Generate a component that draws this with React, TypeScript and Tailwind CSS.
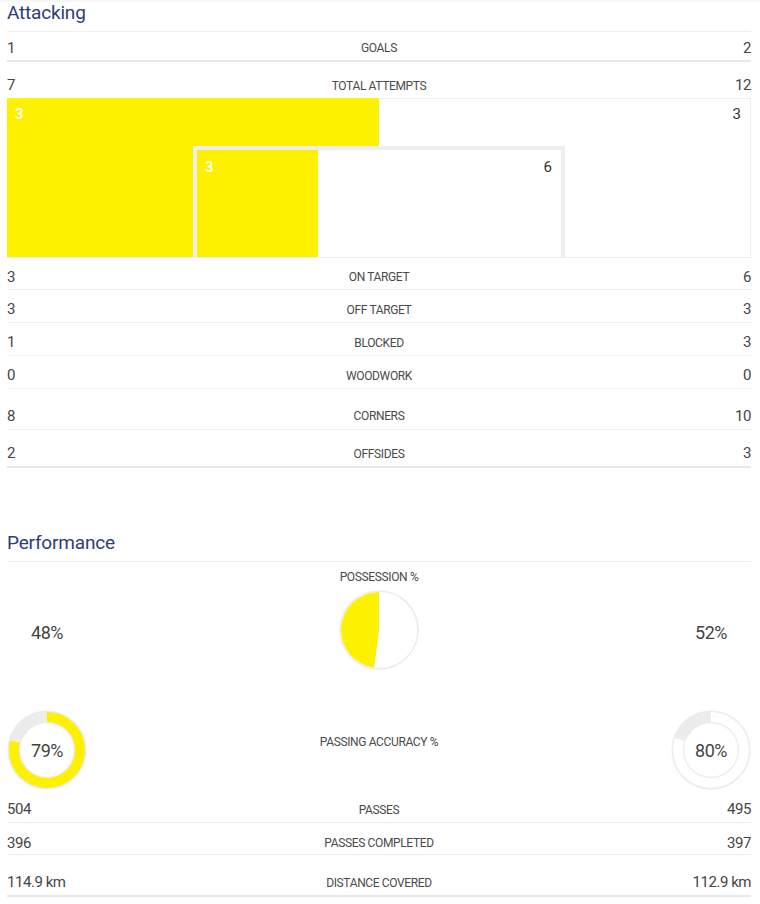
import React from "react";

const YELLOW = "#fdf100";

interface StatRowProps {
  label: string;
  home: string;
  away: string;
  className?: string;
}

const StatRow: React.FC<StatRowProps> = ({ label, home, away, className }) => (
  <div className={`flex items-center ${className ?? ""}`}>
    <span className="w-[120px] text-[15px] text-[#454545] tracking-[-0.03em]">{home}</span>
    <span className="flex-1 text-center text-[12px] text-[#4a4a4a] tracking-[-0.03em]">{label}</span>
    <span className="w-[120px] text-right text-[15px] text-[#454545] tracking-[-0.03em]">{away}</span>
  </div>
);

const SectionTitle: React.FC<{ title: string; className?: string }> = ({ title, className }) => (
  <div className={`h-[32px] border-b border-[#eeeeee] ${className ?? ""}`}>
    <h2 className="text-[19px] leading-[25px] text-[#2f3d78] tracking-[-0.01em]">{title}</h2>
  </div>
);

// nested attempts chart: outer = off target, inner box = on target
const AttemptsChart = () => (
  <div className="relative flex h-[160px] border-b border-[#eeeeee]">
    <div className="w-1/2 pl-[8px] pt-[5px] text-[15px] font-medium text-white" style={{ background: YELLOW }}>
      3
    </div>
    <div className="flex-1 border-t border-r border-[#eeeeee] pr-[9px] pt-[4px] text-right text-[15px] text-[#333]">
      3
    </div>
    <div className="absolute left-1/4 top-[48px] bottom-0 flex w-1/2 border-x-4 border-t-4 border-[#eeeeee] bg-white">
      <div className="w-1/3 pl-[8px] pt-[6px] text-[15px] font-medium text-white" style={{ background: YELLOW }}>
        3
      </div>
      <div className="flex-1 pr-[9px] pt-[6px] text-right text-[15px] text-[#333]">6</div>
    </div>
  </div>
);

const Pie = ({ pct }: { pct: number }) => {
  const a = (pct / 100) * Math.PI * 2;
  const x = 40 - 38 * Math.sin(a);
  const y = 40 - 38 * Math.cos(a);
  return (
    <svg width="80" height="80" viewBox="0 0 80 80">
      <circle cx="40" cy="40" r="38.5" fill="white" />
      <path d={`M40 40 L40 2 A38 38 0 ${pct > 50 ? 1 : 0} 0 ${x} ${y} Z`} fill={YELLOW} />
      <circle cx="40" cy="40" r="39" fill="none" stroke="#ececec" strokeWidth="1.6" />
    </svg>
  );
};

const Donut = ({ pct, color }: { pct: number; color: string }) => {
  const r = 33;
  const c = 2 * Math.PI * r;
  return (
    <div className="relative h-[80px] w-[80px]">
      <svg width="80" height="80" viewBox="0 0 80 80">
        <circle cx="40" cy="40" r={r} fill="none" stroke="#ececec" strokeWidth="11" />
        <circle
          cx="40"
          cy="40"
          r={r}
          fill="none"
          stroke={color}
          strokeWidth="11"
          strokeDasharray={`${(pct / 100) * c} ${c}`}
          transform="rotate(-90 40 40)"
        />
        <circle cx="40" cy="40" r="38.8" fill="none" stroke="#ececec" strokeWidth="1.6" />
        <circle cx="40" cy="40" r="27.4" fill="none" stroke="#ececec" strokeWidth="1.4" />
      </svg>
      <span className="absolute inset-0 flex items-center justify-center text-[18px] text-[#444] tracking-[-0.03em]">
        {pct}%
      </span>
    </div>
  );
};

export default function App() {
  return (
    <div className="min-h-[904px] bg-white pl-[7px] pr-[9px] font-['Roboto',sans-serif] shadow-[inset_0_3px_3px_-2px_rgba(0,0,0,0.07)]">
      <SectionTitle title="Attacking" />
      <StatRow label="GOALS" home="1" away="2" className="h-[30px] pt-[4px] border-b-2 border-[#e9e9e9]" />
      <StatRow label="TOTAL ATTEMPTS" home="7" away="12" className="h-[36px] pt-[11px]" />
      <AttemptsChart />
      <StatRow label="ON TARGET" home="3" away="6" className="h-[32px] pt-[7px] border-b border-[#eeeeee]" />
      <StatRow label="OFF TARGET" home="3" away="3" className="h-[33px] pt-[7px] border-b border-[#eeeeee]" />
      <StatRow label="BLOCKED" home="1" away="3" className="h-[33px] pt-[7px] border-b border-[#eeeeee]" />
      <StatRow label="WOODWORK" home="0" away="0" className="h-[33px] pt-[7px] border-b border-[#eeeeee]" />
      <StatRow label="CORNERS" home="8" away="10" className="h-[41px] pt-[14px] border-b border-[#eeeeee]" />
      <StatRow label="OFFSIDES" home="2" away="3" className="h-[38px] pt-[11px] border-b-2 border-[#e9e9e9]" />

      <SectionTitle title="Performance" className="mt-[62px]" />
      <div className="grid h-[148px] grid-cols-[80px_1fr_80px]">
        <div className="pt-[57px] text-center text-[18px] text-[#444] tracking-[-0.03em]">48%</div>
        <div className="flex flex-col items-center pt-[7px]">
          <span className="text-[12px] leading-[16px] text-[#4a4a4a] tracking-[-0.03em]">POSSESSION %</span>
          <div className="mt-[5px]">
            <Pie pct={48} />
          </div>
        </div>
        <div className="pt-[57px] text-center text-[18px] text-[#444] tracking-[-0.03em]">52%</div>
      </div>
      <div className="grid h-[80px] grid-cols-[80px_1fr_80px]">
        <Donut pct={79} color={YELLOW} />
        <div className="pt-[24px] text-center text-[12px] leading-[16px] text-[#4a4a4a] tracking-[-0.03em]">
          PASSING ACCURACY %
        </div>
        <Donut pct={80} color="#ffffff" />
      </div>
      <StatRow label="PASSES" home="504" away="495" className="h-[33px] pt-[7px] border-b border-[#eeeeee]" />
      <StatRow label="PASSES COMPLETED" home="396" away="397" className="h-[32px] pt-[9px] border-b border-[#eeeeee]" />
      <StatRow label="DISTANCE COVERED" home="114.9 km" away="112.9 km" className="h-[42px] pt-[15px] border-b-2 border-[#e9e9e9]" />
    </div>
  );
}
